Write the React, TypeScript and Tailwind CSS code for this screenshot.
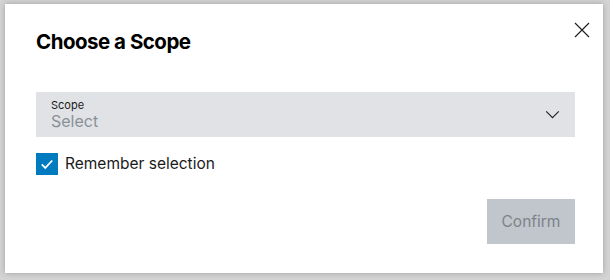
import React, { useState } from 'react';

const font = { fontFamily: 'Inter, "Noto Sans", sans-serif' };

const ScopeDialog = () => {
  const [remember, setRemember] = useState(true);

  return (
    <div className="relative flex flex-col w-[598px] h-[269px] bg-white shadow-[0_0_6px_rgba(0,0,0,0.25)]">
      <button aria-label="Close" className="absolute top-[17px] right-[12px] w-[18px] h-[18px] flex items-center justify-center">
        <svg viewBox="0 0 16 16" className="w-[16px] h-[16px]" fill="none" stroke="#222" strokeWidth="1.2">
          <path d="M1 1 L15 15 M15 1 L1 15" />
        </svg>
      </button>
      <h2 className="pt-[23px] pl-[31px] text-[20.5px] leading-[30px] font-bold text-black tracking-[-0.5px]">
        Choose a Scope
      </h2>
      <div className="mt-[35px] ml-[31px] mr-[28px] h-[45px] bg-[#e0e2e5] flex items-center justify-between pl-[15px] pr-[15px]">
        <div className="flex flex-col pt-[1px]">
          <span className="text-[11px] leading-[13px] text-[#1a1a1a]">Scope</span>
          <span className="text-[16px] leading-[19px] text-[#8a9097]">Select</span>
        </div>
        <svg viewBox="0 0 16 10" className="w-[15px] h-[9px]" fill="none" stroke="#222" strokeWidth="1.3">
          <path d="M1 1.5 L8 8.5 L15 1.5" />
        </svg>
      </div>
      <label className="mt-[16px] ml-[31px] flex items-center gap-[7px] cursor-pointer select-none">
        <button
          onClick={() => setRemember(!remember)}
          className={remember ? 'w-[22px] h-[22px] bg-[#007bc0] flex items-center justify-center' : 'w-[22px] h-[22px] border border-black'}
        >
          {remember && (
            <svg viewBox="0 0 16 16" className="w-[14px] h-[14px]" fill="none" stroke="white" strokeWidth="2">
              <path d="M2 8.5 L6 12.5 L14 4" />
            </svg>
          )}
        </button>
        <span className="text-[15.5px] leading-[22px] text-[#1a1a1a]">Remember selection</span>
      </label>
      <div className="mt-auto mb-[29px] mr-[28px] flex justify-end">
        <button disabled className="w-[88px] h-[45px] bg-[#c1c5cc] text-[15.5px] text-[#7d8389]">
          Confirm
        </button>
      </div>
    </div>
  );
};

export default function App() {
  return (
    <div className="w-[610px] h-[280px] bg-[#d4d4d4] pt-[4px] pl-[5px]" style={font}>
      <ScopeDialog />
    </div>
  );
}
